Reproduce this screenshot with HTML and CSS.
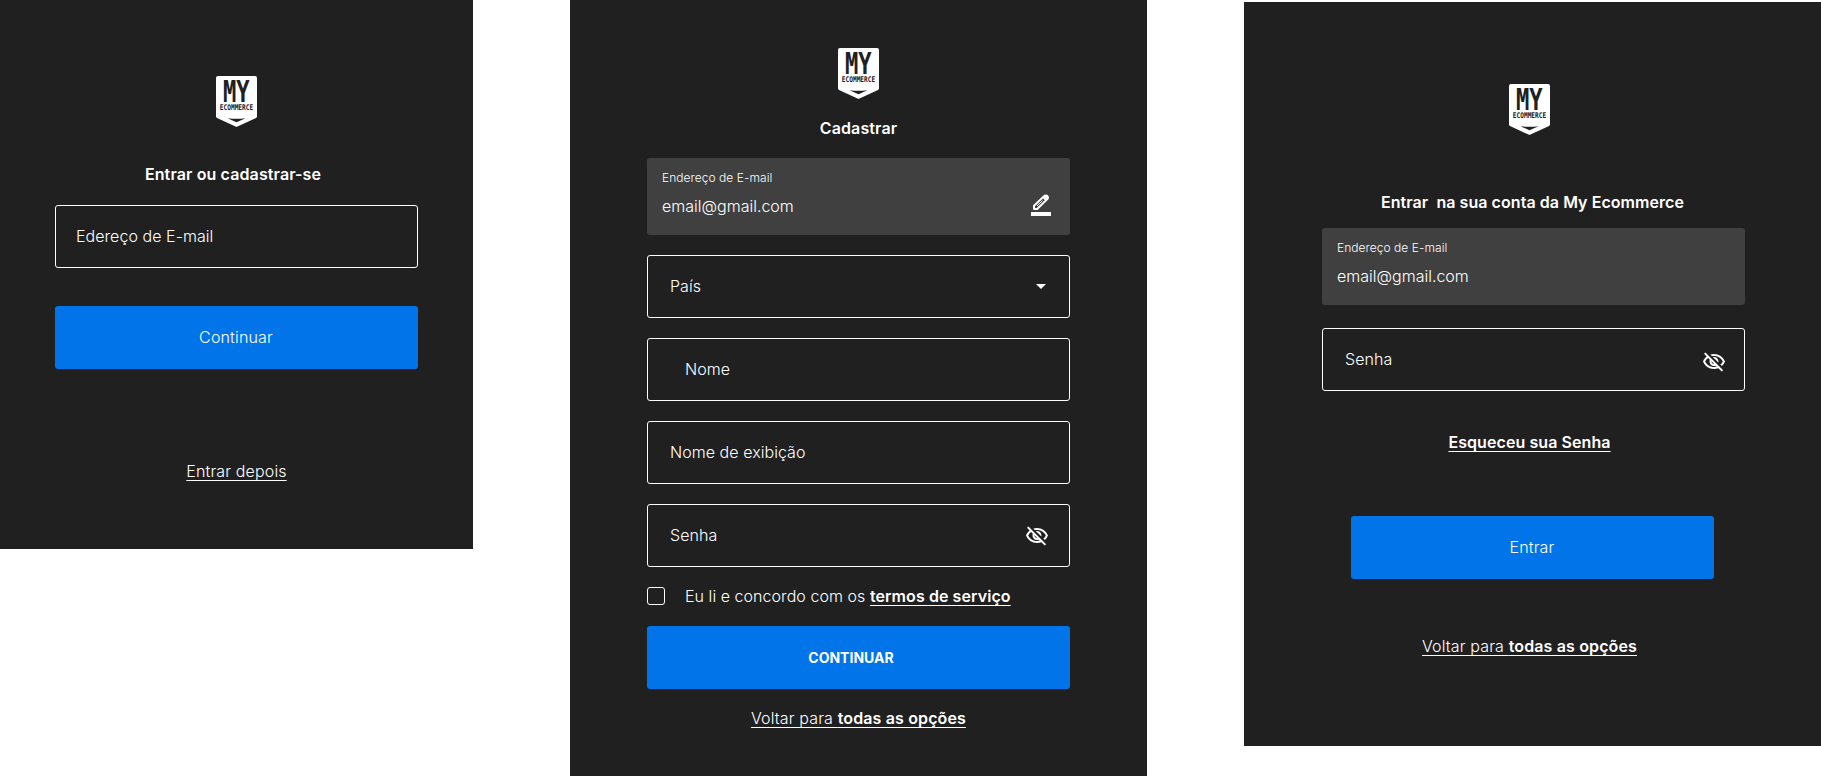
FILE: index.html
```
<!DOCTYPE html>
<html lang="pt-BR">
<head>
<meta charset="utf-8">
<title>My Ecommerce</title>
<link rel="stylesheet" href="styles.css">
</head>
<body>
<svg class="defs" aria-hidden="true">
  <symbol id="logo" viewBox="0 0 41 51">
    <path fill="#fff" d="M2 0H39Q41 0 41 2V40.5Q41 41.4 40 42L21.5 50.6Q20.5 51.1 19.5 50.6L1 42Q0 41.4 0 40.5V2Q0 0 2 0Z"/>
    <path fill="#202020" d="M11.5 42.3Q20.5 43.4 29.5 42.3L20.5 46.3Z"/>
    <text class="logo-my" transform="translate(20.3 25.8) scale(.75 1)" text-anchor="middle">MY</text>
    <text class="logo-name" transform="translate(20.5 33.8) scale(.79 1)" text-anchor="middle">ECOMMERCE</text>
  </symbol>
  <symbol id="eye-off" viewBox="0 0 24 24">
    <path fill="#fff" d="M12 6c3.79 0 7.17 2.13 8.82 5.5-.59 1.22-1.42 2.27-2.41 3.12l1.41 1.41c1.39-1.23 2.49-2.77 3.18-4.53C21.27 7.11 17 4 12 4c-1.27 0-2.49.2-3.64.57l1.65 1.65C10.66 6.09 11.32 6 12 6zm-1.07 1.14L13 9.21c.57.25 1.03.71 1.28 1.28l2.07 2.07c.08-.34.14-.7.14-1.07C16.5 9.01 14.48 7 12 7c-.37 0-.72.05-1.07.14zM2.01 3.87l2.68 2.68C3.06 7.83 1.77 9.53 1 11.5 2.73 15.89 7 19 12 19c1.52 0 2.98-.29 4.32-.82l3.42 3.42 1.41-1.41L3.42 2.45 2.01 3.87zm7.5 7.5l2.61 2.61c-.04.01-.08.02-.12.02-1.38 0-2.5-1.12-2.5-2.5 0-.05.01-.08.01-.13zm-3.4-3.4l1.75 1.75c-.23.55-.36 1.15-.36 1.78 0 2.48 2.02 4.5 4.5 4.5.63 0 1.23-.13 1.77-.36l.98.98c-.88.24-1.8.38-2.75.38-3.79 0-7.17-2.13-8.82-5.5.7-1.43 1.72-2.61 2.93-3.53z"/>
  </symbol>
</svg>
<main class="board">
  <section class="panel welcome">
    <svg class="logo"><use href="#logo"/></svg>
    <h1>Entrar ou cadastrar-se</h1>
    <div class="field">Edereço de E-mail</div>
    <button class="btn">Continuar</button>
    <a class="link">Entrar depois</a>
  </section>

  <section class="panel signup">
    <svg class="logo"><use href="#logo"/></svg>
    <h1>Cadastrar</h1>
    <div class="email">
      <div><small>Endereço de E-mail</small><p>email@gmail.com</p></div>
      <svg class="edit" viewBox="0 0 20 22">
        <path fill="none" stroke="#fff" stroke-width="2" stroke-linejoin="round" d="M3 15V11.8L13.6 1.6L16.8 4.6L6.2 15Z"/>
        <path fill="#fff" d="M11.2 3.8L14 1Q15.3-.2 16.7 1L17.5 1.9Q18.6 3 17.5 4.3L14.7 7ZM0 18H20V22H0Z"/>
        <path stroke="#fff" stroke-width="1" d="M6 12L11.5 6.7"/>
      </svg>
    </div>
    <div class="fields">
      <div class="field">País<svg class="caret" viewBox="0 0 10 5"><path fill="#fff" d="M0 0H10L5 5Z"/></svg></div>
      <div class="field indented">Nome</div>
      <div class="field">Nome de exibição</div>
      <div class="field">Senha<svg class="eye"><use href="#eye-off"/></svg></div>
    </div>
    <div class="terms"><span class="checkbox"></span><span>Eu li e concordo com os <a class="strong-link">termos de serviço</a></span></div>
    <button class="btn strong">CONTINUAR</button>
    <a class="link">Voltar para <b>todas as opções</b></a>
  </section>

  <section class="panel login">
    <svg class="logo"><use href="#logo"/></svg>
    <h1>Entrar&nbsp; na sua conta da My Ecommerce</h1>
    <div class="email">
      <div><small>Endereço de E-mail</small><p>email@gmail.com</p></div>
    </div>
    <div class="field">Senha<svg class="eye"><use href="#eye-off"/></svg></div>
    <a class="strong-link">Esqueceu sua Senha</a>
    <button class="btn">Entrar</button>
    <a class="link">Voltar para <b>todas as opções</b></a>
  </section>
</main>
</body>
</html>
```
FILE: styles.css
```
* { box-sizing: border-box; }
body {
  margin: 0;
  background: #fff;
  color: #fff;
  font: 300 16px/20px Inter, "Liberation Sans", sans-serif;
  letter-spacing: .05px;
  overflow: hidden;
}
.defs { display: none; }
.board {
  display: grid;
  grid-template-columns: 473px 577px 577px;
  column-gap: 97px;
  align-items: start;
  height: 776px;
}
.panel {
  display: flex;
  flex-direction: column;
  background: #202020;
}
.welcome { height: 549px; padding: 76px 55px 0; }
.signup { height: 776px; padding: 48px 77px 0; }
.login { height: 744px; margin-top: 2px; padding: 82px 76px 0 78px; }

.logo { width: 41px; height: 51px; align-self: center; flex: none; letter-spacing: 0; }
.logo-my { font: 700 29.5px "DejaVu Sans Mono", monospace; fill: #202020; }
.logo-name { font: 700 7.8px "DejaVu Sans Mono", monospace; fill: #202020; }

h1 { margin: 0; font-size: 16px; line-height: 20px; font-weight: 600; letter-spacing: .12px; text-align: center; white-space: nowrap; }
.field {
  display: flex;
  align-items: center;
  justify-content: space-between;
  height: 63px;
  padding: 0 20px 2px 22px;
  border: 1px solid #fff;
  border-radius: 3px;
}
.btn {
  display: block;
  height: 63px;
  padding: 0 1px 2px 0;
  border: 0;
  border-radius: 3px;
  background: #0074e8;
  color: #fff;
  font: inherit;
  letter-spacing: .15px;
}
.btn.strong { padding: 0 15px 0 0; font-size: 14px; font-weight: 700; letter-spacing: 0; }
.link, .strong-link { text-decoration: underline; text-underline-offset: 3px; text-decoration-thickness: 1px; text-decoration-skip-ink: none; }
.link { align-self: center; letter-spacing: .14px; }
.link b { font-weight: 600; }
.strong-link { font-weight: 600; letter-spacing: .08px; }

.email {
  display: flex;
  justify-content: space-between;
  height: 77px;
  padding: 12px 19px 0 15px;
  background: #404040;
  border-radius: 3px;
}
.email small { display: block; font-size: 12px; line-height: 16px; }
.email p { margin: 10px 0 0; line-height: 20px; letter-spacing: 0; }
.edit { width: 20px; height: 22px; margin-top: 24px; overflow: visible; }
.caret { width: 10px; height: 5px; margin: 2px 3px 0 0; }
.eye { width: 24px; height: 24px; margin-top: 2px; }

.welcome h1 { margin: 37px 0 21px; padding-right: 7px; }
.welcome .field { padding-left: 20px; }
.welcome .btn { margin-top: 38px; }
.welcome .link { margin-top: 92px; }

.signup h1 { margin: 19px 0 20px; }
.fields { display: grid; row-gap: 20px; margin-top: 20px; }
.fields .indented { padding-left: 37px; }
.terms { display: flex; align-items: center; gap: 20px; height: 20px; margin-top: 19px; }
.checkbox { width: 18px; height: 18px; border: 1px solid #fff; border-radius: 3px; }
.signup .btn { margin-top: 20px; }
.signup .link { margin-top: 19px; }

.login .logo { margin-right: 8px; }
.login h1 { margin: 57px 2px 16px 0; letter-spacing: .06px; }
.login .field { margin-top: 23px; }
.login .eye { margin-top: 6px; margin-right: -2px; }
.login .strong-link { align-self: center; margin: 41px 8px 0 0; }
.login .btn { width: 363px; margin: 64px 0 0 29px; }
.login .link { margin: 57px 8px 0 0; }
```
